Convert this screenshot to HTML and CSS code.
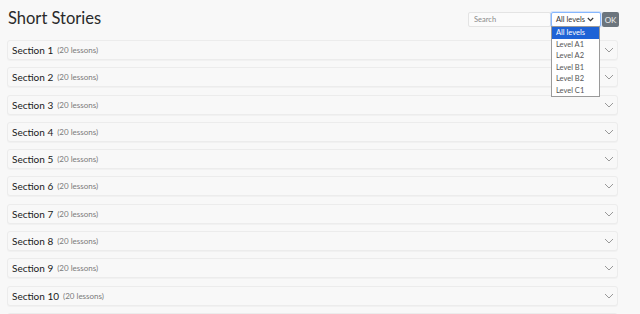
FILE: index.html
```html
<!DOCTYPE html>
<html>
<head>
<meta charset="utf-8">
<link rel="stylesheet" href="styles.css">
</head>
<body>
<div class="page">
  <header class="top">
    <h1 class="title">Short Stories</h1>
    <form class="filter">
      <input class="search" type="text" placeholder="Search">
      <div class="select-wrap">
        <div class="select">
          <span>All levels</span>
          <svg class="sel-chev" width="7" height="5" viewBox="0 0 7 5"><path d="M0.8 1 L3.5 3.7 L6.2 1" fill="none" stroke="#333" stroke-width="1.1"/></svg>
        </div>
        <ul class="menu">
          <li class="active">All levels</li>
          <li>Level A1</li>
          <li>Level A2</li>
          <li>Level B1</li>
          <li>Level B2</li>
          <li>Level C1</li>
        </ul>
      </div>
      <button class="ok" type="button">OK</button>
    </form>
  </header>
  <div class="sections">
    <div class="card"><span class="name">Section 1</span><span class="count">(20 lessons)</span><svg class="chev" width="10" height="6" viewBox="0 0 10 6"><path d="M1 1 L5 5 L9 1" fill="none" stroke="#999" stroke-width="1"/></svg></div>
    <div class="card"><span class="name">Section 2</span><span class="count">(20 lessons)</span><svg class="chev" width="10" height="6" viewBox="0 0 10 6"><path d="M1 1 L5 5 L9 1" fill="none" stroke="#999" stroke-width="1"/></svg></div>
    <div class="card"><span class="name">Section 3</span><span class="count">(20 lessons)</span><svg class="chev" width="10" height="6" viewBox="0 0 10 6"><path d="M1 1 L5 5 L9 1" fill="none" stroke="#999" stroke-width="1"/></svg></div>
    <div class="card"><span class="name">Section 4</span><span class="count">(20 lessons)</span><svg class="chev" width="10" height="6" viewBox="0 0 10 6"><path d="M1 1 L5 5 L9 1" fill="none" stroke="#999" stroke-width="1"/></svg></div>
    <div class="card"><span class="name">Section 5</span><span class="count">(20 lessons)</span><svg class="chev" width="10" height="6" viewBox="0 0 10 6"><path d="M1 1 L5 5 L9 1" fill="none" stroke="#999" stroke-width="1"/></svg></div>
    <div class="card"><span class="name">Section 6</span><span class="count">(20 lessons)</span><svg class="chev" width="10" height="6" viewBox="0 0 10 6"><path d="M1 1 L5 5 L9 1" fill="none" stroke="#999" stroke-width="1"/></svg></div>
    <div class="card"><span class="name">Section 7</span><span class="count">(20 lessons)</span><svg class="chev" width="10" height="6" viewBox="0 0 10 6"><path d="M1 1 L5 5 L9 1" fill="none" stroke="#999" stroke-width="1"/></svg></div>
    <div class="card"><span class="name">Section 8</span><span class="count">(20 lessons)</span><svg class="chev" width="10" height="6" viewBox="0 0 10 6"><path d="M1 1 L5 5 L9 1" fill="none" stroke="#999" stroke-width="1"/></svg></div>
    <div class="card"><span class="name">Section 9</span><span class="count">(20 lessons)</span><svg class="chev" width="10" height="6" viewBox="0 0 10 6"><path d="M1 1 L5 5 L9 1" fill="none" stroke="#999" stroke-width="1"/></svg></div>
    <div class="card"><span class="name">Section 10</span><span class="count">(20 lessons)</span><svg class="chev" width="10" height="6" viewBox="0 0 10 6"><path d="M1 1 L5 5 L9 1" fill="none" stroke="#999" stroke-width="1"/></svg></div>
    <div class="card"></div>
  </div>
</div>
</body>
</html>
```
FILE: styles.css
```css
* { box-sizing: border-box; }
html, body { margin: 0; padding: 0; }
body {
  background: #f8f8f8;
  font-family: "Lato", "Open Sans", sans-serif;
  color: #212529;
  overflow: hidden;
  height: 314px;
}
.page { padding: 7px 22px 0 7px; }
.top {
  display: flex;
  justify-content: space-between;
  align-items: flex-start;
  height: 33px;
}
.title {
  margin: 0;
  padding-left: 1px;
  font-size: 16.5px;
  font-weight: 400;
  line-height: 22px;
  color: #2a2a2a;
}
.filter {
  display: flex;
  align-items: stretch;
  margin: 5px -1px 0 0;
  height: 15px;
}
.search {
  width: 83px;
  height: 15px;
  border: 1px solid #e4e4e4;
  border-radius: 2px;
  background: #fbfbfb;
  font-family: inherit;
  font-size: 7.5px;
  padding: 0 5px;
  color: #333;
  outline: none;
}
.search::placeholder { color: #8a8a8a; }
.select-wrap { position: relative; }
.select {
  width: 50px;
  height: 15px;
  border: 1px solid #86b7fe;
  border-radius: 2px;
  background: #fff;
  box-shadow: 0 0 0 1px rgba(13,110,253,.15);
  display: flex;
  align-items: center;
  justify-content: space-between;
  padding: 0 6px 0 4px;
  font-size: 7.5px;
  color: #333;
}
.menu {
  position: absolute;
  left: 0;
  top: 14px;
  width: 49px;
  margin: 0;
  padding: 0;
  list-style: none;
  background: #fff;
  border: 1px solid #9a9a9a;
  font-size: 7.5px;
  color: #555;
  z-index: 5;
}
.menu li {
  height: 11.5px;
  line-height: 11.5px;
  padding-left: 4px;
}
.menu li.active {
  background: #1e63d6;
  color: #fff;
}
.ok {
  width: 17px;
  height: 15px;
  border: none;
  border-radius: 2px;
  margin-left: 1px;
  background: #6c757d;
  color: #f0f0f0;
  font-family: inherit;
  font-size: 8px;
  padding: 0;
}
.sections {
  display: flex;
  flex-direction: column;
  gap: 7.3px;
}
.card {
  flex: none;
  height: 20px;
  background: #f8f8f8;
  border: 1px solid #ececec;
  border-radius: 3px;
  box-shadow: 0 1px 1px rgba(0,0,0,.03);
  display: flex;
  align-items: center;
  padding: 0 3px 0 4px;
}
.name {
  font-size: 10px;
  color: #1a1a1a;
}
.count {
  font-size: 8px;
  color: #7a7a7a;
  margin-left: 4px;
}
.chev { margin-left: auto; }
```
